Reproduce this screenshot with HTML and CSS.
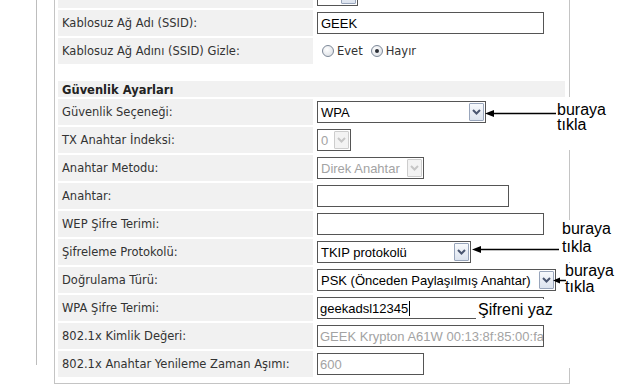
FILE: index.html
```html
<!DOCTYPE html>
<html lang="tr">
<head>
<meta charset="utf-8">
<title>Güvenlik Ayarları</title>
<link rel="stylesheet" href="styles.css">
</head>
<body>
<div class="page">
  <div class="panel">
    <div class="grid">
      <div class="lbl"></div>
      <div class="val"><div class="field sel w41"><span class="txt">10</span><span class="btn"><svg width="9" height="6" viewBox="0 0 9 6"><polyline points="1,1 4.5,4.5 8,1"/></svg></span></div></div>

      <div class="lbl">Kablosuz Ağ Adı (SSID):</div>
      <div class="val"><div class="field inp w227">GEEK</div></div>

      <div class="lbl">Kablosuz Ağ Adını (SSID) Gizle:</div>
      <div class="val radios">
        <span class="radio"></span><span class="rtxt">Evet</span>
        <span class="radio on"></span><span class="rtxt">Hayır</span>
      </div>

      <div class="spacer"></div>
      <div class="head">Güvenlik Ayarları</div>

      <div class="lbl">Güvenlik Seçeneği:</div>
      <div class="val"><div class="field sel w169"><span class="txt">WPA</span><span class="btn"><svg width="9" height="6" viewBox="0 0 9 6"><polyline points="1,1 4.5,4.5 8,1"/></svg></span></div></div>

      <div class="lbl">TX Anahtar İndeksi:</div>
      <div class="val"><div class="field sel dis w34"><span class="txt">0</span><span class="btn"><svg width="9" height="6" viewBox="0 0 9 6"><polyline points="1,1 4.5,4.5 8,1"/></svg></span></div></div>

      <div class="lbl">Anahtar Metodu:</div>
      <div class="val"><div class="field sel dis w107"><span class="txt">Direk Anahtar</span><span class="btn"><svg width="9" height="6" viewBox="0 0 9 6"><polyline points="1,1 4.5,4.5 8,1"/></svg></span></div></div>

      <div class="lbl">Anahtar:</div>
      <div class="val"><div class="field inp w192"></div></div>

      <div class="lbl">WEP Şifre Terimi:</div>
      <div class="val"><div class="field inp w227"></div></div>

      <div class="lbl">Şifreleme Protokolü:</div>
      <div class="val"><div class="field sel w154"><span class="txt">TKIP protokolü</span><span class="btn"><svg width="9" height="6" viewBox="0 0 9 6"><polyline points="1,1 4.5,4.5 8,1"/></svg></span></div></div>

      <div class="lbl">Doğrulama Türü:</div>
      <div class="val"><div class="field sel w239"><span class="txt">PSK (Önceden Paylaşılmış Anahtar)</span><span class="btn"><svg width="9" height="6" viewBox="0 0 9 6"><polyline points="1,1 4.5,4.5 8,1"/></svg></span></div></div>

      <div class="lbl">WPA Şifre Terimi:</div>
      <div class="val"><div class="field inp tight w227">geekadsl12345<span class="caret"></span></div></div>

      <div class="lbl">802.1x Kimlik Değeri:</div>
      <div class="val"><div class="field inp tight dis w227">GEEK Krypton A61W 00:13:8f:85:00:fa</div></div>

      <div class="lbl">802.1x Anahtar Yenileme Zaman Aşımı:</div>
      <div class="val"><div class="field inp tight dis w107">600</div></div>
    </div>
  </div>
</div>

<div class="note n1">buraya<br>tıkla</div>
<div class="note n2">buraya<br>tıkla</div>
<div class="note n3">buraya<br>tıkla</div>
<div class="note n4">Şifreni yaz</div>

<svg class="arrows" width="632" height="387" viewBox="0 0 632 387">
  <line x1="492" y1="113.5" x2="556" y2="113.5"/>
  <polygon points="485,113.5 494,110 494,117"/>
  <line x1="479" y1="249.5" x2="559" y2="249.5"/>
  <polygon points="472,249.5 481,246 481,253"/>
  <line x1="558" y1="280.5" x2="566" y2="280.5"/>
  <polygon points="553,280.5 560,277.5 560,283.5"/>
</svg>
</body>
</html>
```

FILE: styles.css
```css
html, body {
  margin: 0;
  padding: 0;
  background: #fff;
}

body {
  position: relative;
  width: 632px;
  height: 387px;
  overflow: hidden;
  font-family: "DejaVu Sans", Verdana, sans-serif;
  font-size: 11.5px;
  color: #333;
}

.page {
  margin-left: 36px;
  border-left: 1px solid #bdbdbd;
  height: 387px;
  padding-left: 17px;
}

.panel {
  margin-top: -22px;
  width: 507px;
  border: 1px solid #c4c4c4;
  padding: 3px 4px 6px 3px;
}

.grid {
  display: grid;
  grid-template-columns: 255px 250px;
  grid-template-rows: 26px 26px 26px 13px 16px repeat(10, 26px);
  column-gap: 2px;
  row-gap: 2px;
}

.lbl {
  background: #f1f1f1;
  padding-left: 4px;
  display: flex;
  align-items: center;
  white-space: nowrap;
}

.val {
  padding-left: 2px;
  display: flex;
  align-items: center;
}

.spacer {
  grid-column: 1 / -1;
}

.head {
  grid-column: 1 / -1;
  background: #f1f1f1;
  padding-left: 4px;
  font-weight: bold;
  color: #222;
  display: flex;
  align-items: flex-end;
}

.field {
  box-sizing: border-box;
  height: 22px;
  border: 1px solid #555;
  background: #fff;
  font-family: "Liberation Sans", Arial, sans-serif;
  font-size: 13px;
  color: #000;
  display: flex;
  align-items: center;
  overflow: hidden;
  white-space: nowrap;
}

.inp { padding-left: 3px; }
.inp.tight { padding-left: 2px; }

.sel .txt {
  flex: 1;
  padding-left: 3px;
  overflow: hidden;
}

.btn {
  flex: none;
  box-sizing: border-box;
  width: 15px;
  height: 18px;
  margin-right: 1px;
  border: 1px solid #98a5bb;
  border-radius: 1px;
  background: linear-gradient(#f8fafd, #dce3ee);
  color: #4a5670;
  display: flex;
  align-items: center;
  justify-content: center;
}

.btn svg polyline {
  fill: none;
  stroke: currentColor;
  stroke-width: 2;
}

.dis { color: #a3a3a3; }
.dis .btn {
  border-color: #cdcdcd;
  background: #f3f3f3;
  color: #c6c6c6;
}

.caret {
  display: inline-block;
  width: 1px;
  height: 15px;
  background: #000;
  margin-left: 1px;
}

.w41 { width: 41px; }
.w34 { width: 34px; }
.w107 { width: 107px; }
.w154 { width: 154px; }
.w169 { width: 169px; }
.w192 { width: 192px; }
.w227 { width: 227px; }
.w239 { width: 239px; }

.radios { color: #333; }

.radio {
  position: relative;
  box-sizing: border-box;
  width: 12px;
  height: 12px;
  border-radius: 50%;
  border: 1px solid #7d8898;
  background: radial-gradient(circle at 40% 35%, #ffffff, #d6dae0);
  margin-left: 5px;
  margin-right: 3px;
}

.radio + .rtxt + .radio { margin-left: 8px; }

.radio.on::after {
  content: "";
  position: absolute;
  left: 3px;
  top: 3px;
  width: 4px;
  height: 4px;
  border-radius: 50%;
  background: #2b2f36;
}

.note {
  position: absolute;
  box-sizing: border-box;
  background: #fff;
  font-family: "Liberation Sans", Arial, sans-serif;
  font-size: 16px;
  color: #000;
  white-space: nowrap;
}

.n1 {
  left: 556px;
  top: 97px;
  width: 64px;
  height: 53px;
  padding-top: 5px;
  padding-left: 1px;
  line-height: 15px;
}

.n2 {
  left: 560px;
  top: 220px;
  width: 60px;
  height: 42px;
  padding-left: 2px;
  line-height: 18px;
}

.n3 {
  left: 562px;
  top: 263px;
  width: 58px;
  height: 105px;
  padding-left: 3px;
  line-height: 16px;
}

.n4 {
  left: 476px;
  top: 299px;
  width: 76px;
  height: 21px;
  padding-left: 2px;
  line-height: 21px;
}

.arrows {
  position: absolute;
  left: 0;
  top: 0;
}

.arrows line {
  stroke: #000;
  stroke-width: 1.5;
}

.arrows polygon {
  fill: #000;
}
```
